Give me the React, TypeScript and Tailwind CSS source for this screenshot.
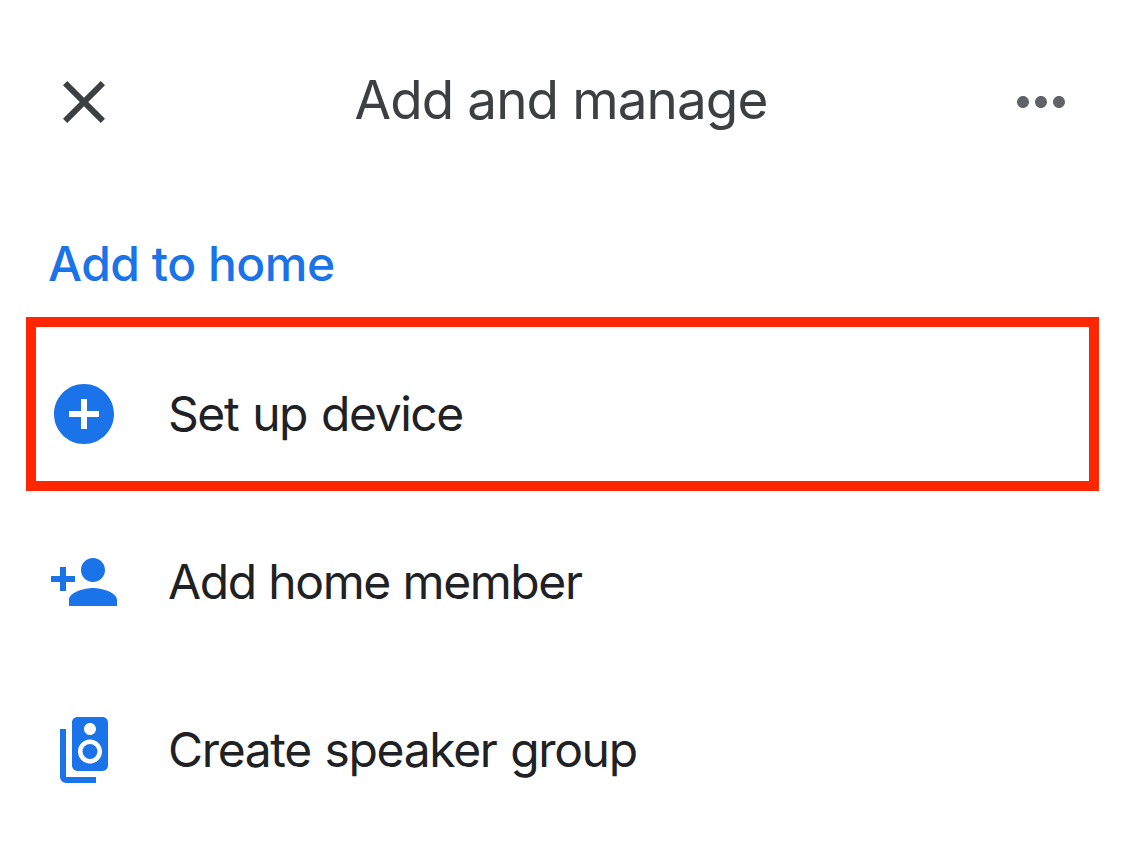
import React from "react";
import { MdClose, MdMoreHoriz, MdAddCircle, MdPersonAdd, MdSpeakerGroup } from "react-icons/md";

type RowProps = {
    icon: React.ReactNode;
    label: string;
    labelClass: string;
};

const Row = ({ icon, label, labelClass }: RowProps) => (
    <button className="flex h-[168px] w-full items-center gap-[48px] px-[48px] text-left text-[#202124]">
        <span className="shrink-0 text-[#1a73e8]">{icon}</span>
        <span className={`whitespace-nowrap text-[48px] leading-[60px] ${labelClass}`}>{label}</span>
    </button>
);

const App = () => {
    return (
        <main className="h-[842px] w-[1125px] overflow-hidden bg-white font-['Inter',sans-serif]">
            <header className="flex h-[204px] items-center justify-between px-[48px]">
                <button aria-label="Close" className="text-[#3c4043]">
                    <MdClose size={72} />
                </button>
                <h1 className="-mt-[4px] whitespace-nowrap pr-[3px] text-[53px] leading-[64px] tracking-[-0.9px] text-[#3c4043]">
                    Add and manage
                </h1>
                <button aria-label="More options" className="text-[#5f6368]">
                    <MdMoreHoriz size={72} />
                </button>
            </header>

            <h2 className="mt-[30px] h-[60px] whitespace-nowrap pl-[48px] text-[48px] font-medium leading-[60px] tracking-[-0.5px] text-[#1a73e8]">
                Add to home
            </h2>

            {/* highlighted row */}
            <div className="mx-[26px] mt-[23px] flex h-[174px] items-center border-[10px] border-[#ff2600]">
                <div className="-mx-[36px] mt-[20px] w-[1125px] shrink-0">
                    <Row icon={<MdAddCircle size={72} />} label="Set up device" labelClass="tracking-[-1.45px] [word-spacing:2px]" />
                </div>
            </div>
            <div className="mt-[7px]">
                <Row icon={<MdPersonAdd size={72} />} label="Add home member" labelClass="tracking-[-1.4px] [word-spacing:0.5px]" />
                <Row icon={<MdSpeakerGroup size={72} />} label="Create speaker group" labelClass="tracking-[-1.35px] [word-spacing:1.5px]" />
            </div>
        </main>
    );
};

export default App;
